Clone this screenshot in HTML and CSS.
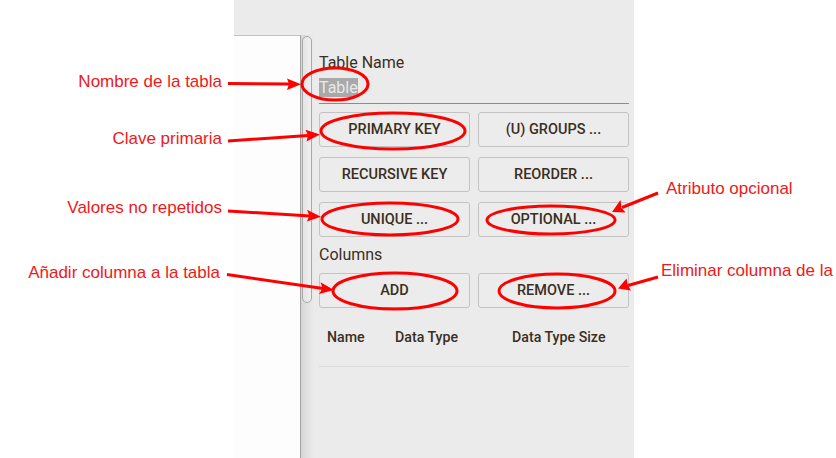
FILE: index.html
```html
<!DOCTYPE html>
<html>
<head>
<meta charset="utf-8">
<link rel="stylesheet" href="styles.css">
</head>
<body>
<div class="app">
  <div class="blank"></div>
  <div class="panel">
    <div class="list"></div>
    <div class="scroll"><div class="thumb"></div></div>
    <div class="form">
      <div class="label">Table Name</div>
      <div class="field"><span class="sel">Table</span></div>
      <div class="btn-grid">
        <div class="btn">PRIMARY KEY</div>
        <div class="btn">(U) GROUPS ...</div>
        <div class="btn">RECURSIVE KEY</div>
        <div class="btn">REORDER ...</div>
        <div class="btn">UNIQUE ...</div>
        <div class="btn">OPTIONAL ...</div>
      </div>
      <div class="label columns-label">Columns</div>
      <div class="btn-grid">
        <div class="btn">ADD</div>
        <div class="btn">REMOVE ...</div>
      </div>
      <div class="table-head">
        <span class="c-name">Name</span>
        <span class="c-type">Data Type</span>
        <span class="c-size">Data Type Size</span>
      </div>
    </div>
  </div>
</div>

<svg class="annot" width="836" height="458" viewBox="0 0 836 458">
  <g fill="none" stroke="#f00" stroke-width="3">
    <ellipse cx="335" cy="84" rx="33" ry="16"/>
    <ellipse cx="393" cy="131" rx="72" ry="18"/>
    <ellipse cx="390" cy="219" rx="68" ry="16"/>
    <ellipse cx="551" cy="220" rx="64" ry="14"/>
    <ellipse cx="395" cy="291" rx="62" ry="18"/>
    <ellipse cx="557" cy="291" rx="58" ry="17"/>
    <line x1="228" y1="83.5" x2="290" y2="84"/>
    <line x1="228" y1="141" x2="308" y2="135.5"/>
    <line x1="228" y1="211" x2="310" y2="216"/>
    <line x1="227" y1="274.5" x2="323" y2="288.5"/>
    <line x1="658" y1="193" x2="622" y2="207.5"/>
    <line x1="658" y1="277" x2="628" y2="285.5"/>
  </g>
  <g fill="#f00">
    <polygon points="301,84.3 287,78.5 289,84 287,90"/>
    <polygon points="320,134.6 305.5,129.8 308,135.6 306.5,141.6"/>
    <polygon points="321,216.8 307,209.8 309.5,215.8 306.8,221.6"/>
    <polygon points="334,290 320.5,282.3 322.5,288.3 319,294"/>
    <polygon points="612,212 620.5,200 621.5,207.8 625.5,212.5"/>
    <polygon points="618,288.5 626.5,278.5 628,285.5 631,290.5"/>
  </g>
</svg>

<div class="note note-nombre">Nombre de la tabla</div>
<div class="note note-clave">Clave primaria</div>
<div class="note note-valores">Valores no repetidos</div>
<div class="note note-anadir">Añadir columna a la tabla</div>
<div class="note note-atributo">Atributo opcional</div>
<div class="note note-eliminar">Eliminar columna de la</div>
</body>
</html>
```

FILE: styles.css
```css
* { box-sizing: border-box; }

html, body {
  margin: 0;
  padding: 0;
  background: #ffffff;
  width: 836px;
  height: 458px;
  overflow: hidden;
  font-family: Roboto, "Liberation Sans", sans-serif;
}

.app {
  display: flex;
  height: 458px;
}

.blank {
  width: 234px;
  background: #ffffff;
}

.panel {
  width: 400px;
  background: #ebebeb;
  display: flex;
  padding-top: 35px;
}

.list {
  width: 67px;
  background: #fdfdfd;
  border-top: 1px solid #c4c4c4;
  border-right: 1px solid #a3a3a3;
}

.scroll {
  width: 13px;
  background: linear-gradient(to right, #d6d6d6, #e6e6e6 70%, #ebebeb);
  padding: 1px 2px 0 1px;
}

.thumb {
  height: 267px;
  border: 1px solid #a8a8a8;
  border-radius: 5px;
  background: linear-gradient(to right, #e4e4e4, #f0f0f0);
}

.form {
  flex: 1;
  padding: 19px 5px 0 5px;
  color: #3a2f22;
}

.label {
  font-size: 16px;
  line-height: 18px;
  color: #3a2f22;
}

.field {
  padding: 6px 0 6px;
  border-bottom: 1px solid #8c8c8c;
  font-size: 16px;
  line-height: 19px;
}

.sel {
  display: inline-block;
  background: #a9a9a9;
  color: #e9e9e9;
}

.btn-grid {
  display: grid;
  grid-template-columns: 151px 151px;
  column-gap: 8px;
  row-gap: 10px;
  margin-top: 8px;
}

.btn {
  height: 35px;
  display: flex;
  align-items: center;
  justify-content: center;
  border: 1px solid #c3c3c3;
  border-radius: 3px;
  background: #ececec;
  font-size: 14.5px;
  font-weight: 500;
  color: #3a2f22;
}

.columns-label {
  margin-top: 9px;
}

.columns-label + .btn-grid {
  margin-top: 9px;
}

.table-head {
  display: flex;
  margin-top: 21px;
  padding: 0 0 20px 8px;
  border-bottom: 1px solid #dadada;
  font-size: 14.2px;
  line-height: 17px;
  font-weight: 500;
  color: #3a2f22;
}

.c-name { width: 68px; }
.c-type { width: 117px; }

.annot {
  position: absolute;
  left: 0;
  top: 0;
  pointer-events: none;
}

.note {
  position: absolute;
  font-family: "Liberation Sans", Arial, sans-serif;
  font-size: 17px;
  line-height: 20px;
  color: #f01818;
  white-space: nowrap;
}

.note-nombre   { right: 614px; top: 72px; }
.note-clave    { right: 614px; top: 129px; }
.note-valores  { right: 614px; top: 198px; }
.note-anadir   { right: 616px; top: 263px; }
.note-atributo { left: 666px;  top: 179px; }
.note-eliminar { left: 661px;  top: 261px; }
```
